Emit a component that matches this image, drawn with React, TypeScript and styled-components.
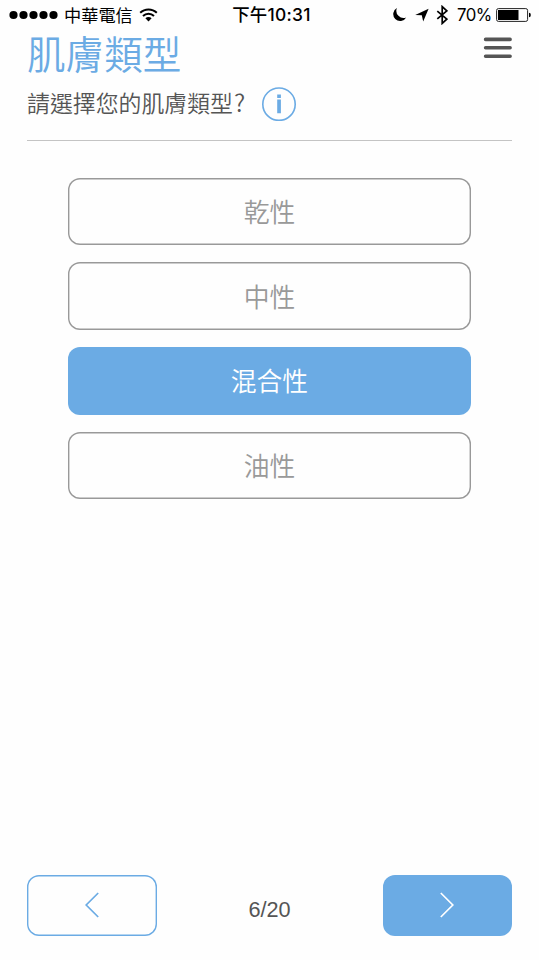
import React from 'react';
import styled, { createGlobalStyle, css } from 'styled-components';

const BLUE = '#6babe4';
const cjk = '"Noto Sans CJK TC", sans-serif';

const GlobalStyle = createGlobalStyle`
  * { box-sizing: border-box; }
  body { margin: 0; background: #fefefe; }
  button { appearance: none; margin: 0; padding: 0; background: none; border: 0; }
`;

const Screen = styled.main`
  width: 539px;
  height: 960px;
  display: flex;
  flex-direction: column;
  overflow: hidden;
  font-family: "Liberation Sans", ${cjk};
  color: #555;
`;

const StatusBar = styled.div`
  height: 30px;
  flex: none;
  display: grid;
  grid-template-columns: 1fr auto 1fr;
  align-items: center;
  padding: 0 8px 0 9px;
  color: #000;
  font: 400 17.2px/30px Inter, ${cjk};
  white-space: nowrap;
`;

const StatusGroup = styled.div<{ $end?: boolean }>`
  display: flex;
  align-items: center;
  justify-content: ${(p) => (p.$end ? 'flex-end' : 'flex-start')};
  height: 30px;
  svg { display: block; flex: none; }
`;

const Carrier = styled.span`
  margin: 0 7px 0 6px;
  width: 68px;
  padding-top: 1px;
`;

const Clock = styled.span`
  font-weight: 500;
  font-size: 17.4px;
  letter-spacing: 0.3px;
  margin-left: 3px;
  height: 30px;
`;

const Percent = styled.span`
  margin: 0 6px 0 9px;
  width: 33px;
  font-size: 16.8px;
  letter-spacing: -0.5px;
`;

const Header = styled.header`
  flex: none;
  height: 111px;
  margin: 0 27px;
  border-bottom: 1px solid #c4c4c4;
`;

const TitleRow = styled.div`
  display: flex;
  justify-content: space-between;
  height: 48px;
`;

const Title = styled.h1`
  margin: 0;
  font: 350 38.6px/45px ${cjk};
  color: ${BLUE};
`;

const MenuButton = styled.button`
  height: 22px;
  margin-top: 7px;
  svg { display: block; }
`;

const QuestionRow = styled.div`
  display: flex;
  align-items: center;
  height: 52px;
  gap: 14px;
`;

const Question = styled.p`
  margin: 0;
  width: 221px;
  padding-bottom: 4px;
  font: 350 22.9px/40px ${cjk};
  white-space: nowrap;
`;

const QuestionMark = styled.span`
  font-size: 24px;
  line-height: 1;
  margin-left: 1px;
`;

const InfoButton = styled.button`
  height: 34px;
  svg { display: block; }
`;

const Options = styled.div`
  display: flex;
  flex-direction: column;
  gap: 17.3px;
  width: 402.5px;
  margin: 36.5px 0 0 68.2px;
`;

const outlined = css`
  background: #fefefe;
  box-shadow: inset 0 0 0 1.4px currentColor;
  color: #999;
`;

const filled = css`
  background: ${BLUE};
  color: #fff;
`;

const Option = styled.button<{ $selected?: boolean }>`
  display: flex;
  align-items: center;
  justify-content: center;
  height: 67.5px;
  padding-bottom: 1px;
  border-radius: 12px;
  font: 350 25.8px/38px ${cjk};
  ${(p) => (p.$selected ? filled : outlined)}
`;

const Footer = styled.footer`
  display: flex;
  justify-content: space-between;
  align-items: center;
  margin: auto 27px 24.5px;
  height: 60.5px;
`;

const NavButton = styled.button<{ $primary?: boolean }>`
  display: flex;
  align-items: center;
  justify-content: center;
  width: 129.5px;
  height: 60.5px;
  border-radius: 12px;
  ${(p) => (p.$primary ? filled : outlined)}
  ${(p) => !p.$primary && css`color: ${BLUE};`}
`;

const Progress = styled.span`
  font-size: 21.7px;
  line-height: 26px;
  padding-top: 9px;
`;

const SignalDots = () => (
  <svg width="49" height="10" viewBox="0 0 49 10">
    {[0, 1, 2, 3, 4].map((i) => (
      <circle key={i} cx={4.5 + i * 10} cy="5" r="4.1" />
    ))}
  </svg>
);

const Wifi = () => (
  <svg width="19" height="14" viewBox="0 0 19 14" fill="none" stroke="#000" strokeWidth="2">
    <path d="M1.2 4.8a11.8 11.8 0 0 1 16.6 0M4 8a7.8 7.8 0 0 1 11 0" />
    <path d="M6.4 10.3a4.4 4.4 0 0 1 6.2 0l-3.1 3.2z" fill="#000" stroke="none" />
  </svg>
);

const StatusIcons = () => (
  <svg width="57" height="20" viewBox="0 0 57 20">
    <path d="M5.9 3A6.9 6.9 0 1 0 15.2 12.4A7.2 7.2 0 0 1 5.9 3z" />
    <path d="M37.6 3.8 32.2 16.6 30.8 10.3 24.2 10z" />
    <path d="M46.3 6.1 55.8 14.1 51.2 18.4V1.6L55.8 5.9 46.3 13.9" fill="none" stroke="#000" strokeWidth="1.7" />
  </svg>
);

const Battery = () => (
  <svg width="35" height="14" viewBox="0 0 35 14">
    <rect x=".6" y=".6" width="31" height="12.8" rx="1.8" fill="none" stroke="#222" />
    <rect x="2" y="2" width="20.5" height="10" />
    <path d="M33 4.8q1.8 0 1.8 2.2T33 9.2z" />
  </svg>
);

const MenuIcon = () => (
  <svg width="29" height="22" viewBox="0 0 29 22" stroke="#555" strokeWidth="3.6" strokeLinecap="round">
    <path d="M2.6 2.4h24.5M2.6 10.8h24.5M2.6 19.2h24.5" />
  </svg>
);

const InfoIcon = () => (
  <svg width="35" height="34" viewBox="0 0 35 34">
    <circle cx="17" cy="17.2" r="16.2" fill="none" stroke={BLUE} strokeWidth="1.6" />
    <path d="M15.2 7.6h3.7v3.3h-3.7zM15.2 12.6h3.7v13.6h-3.7z" fill={BLUE} />
  </svg>
);

const Chevron = ({ next = false }: { next?: boolean }) => (
  <svg width="14" height="26" viewBox="0 0 14 26" fill="none" stroke="currentColor" strokeWidth="1.7">
    <path d={next ? 'M.8 1 12.8 13 .8 25' : 'M13.2 1 1.2 13 13.2 25'} />
  </svg>
);

const skinTypes = ['乾性', '中性', '混合性', '油性'];

export default function App() {
  const [selected, setSelected] = React.useState('混合性');
  return (
    <Screen>
      <GlobalStyle />
      <StatusBar>
        <StatusGroup>
          <SignalDots />
          <Carrier>中華電信</Carrier>
          <Wifi />
        </StatusGroup>
        <Clock>下午10:31</Clock>
        <StatusGroup $end>
          <StatusIcons />
          <Percent>70%</Percent>
          <Battery />
        </StatusGroup>
      </StatusBar>
      <Header>
        <TitleRow>
          <Title>肌膚類型</Title>
          <MenuButton aria-label="選單"><MenuIcon /></MenuButton>
        </TitleRow>
        <QuestionRow>
          <Question>請選擇您的肌膚類型<QuestionMark>?</QuestionMark></Question>
          <InfoButton aria-label="說明"><InfoIcon /></InfoButton>
        </QuestionRow>
      </Header>
      <Options>
        {skinTypes.map((name) => (
          <Option key={name} $selected={name === selected} onClick={() => setSelected(name)}>
            {name}
          </Option>
        ))}
      </Options>
      <Footer>
        <NavButton aria-label="上一步"><Chevron /></NavButton>
        <Progress>6/20</Progress>
        <NavButton $primary aria-label="下一步"><Chevron next /></NavButton>
      </Footer>
    </Screen>
  );
}
